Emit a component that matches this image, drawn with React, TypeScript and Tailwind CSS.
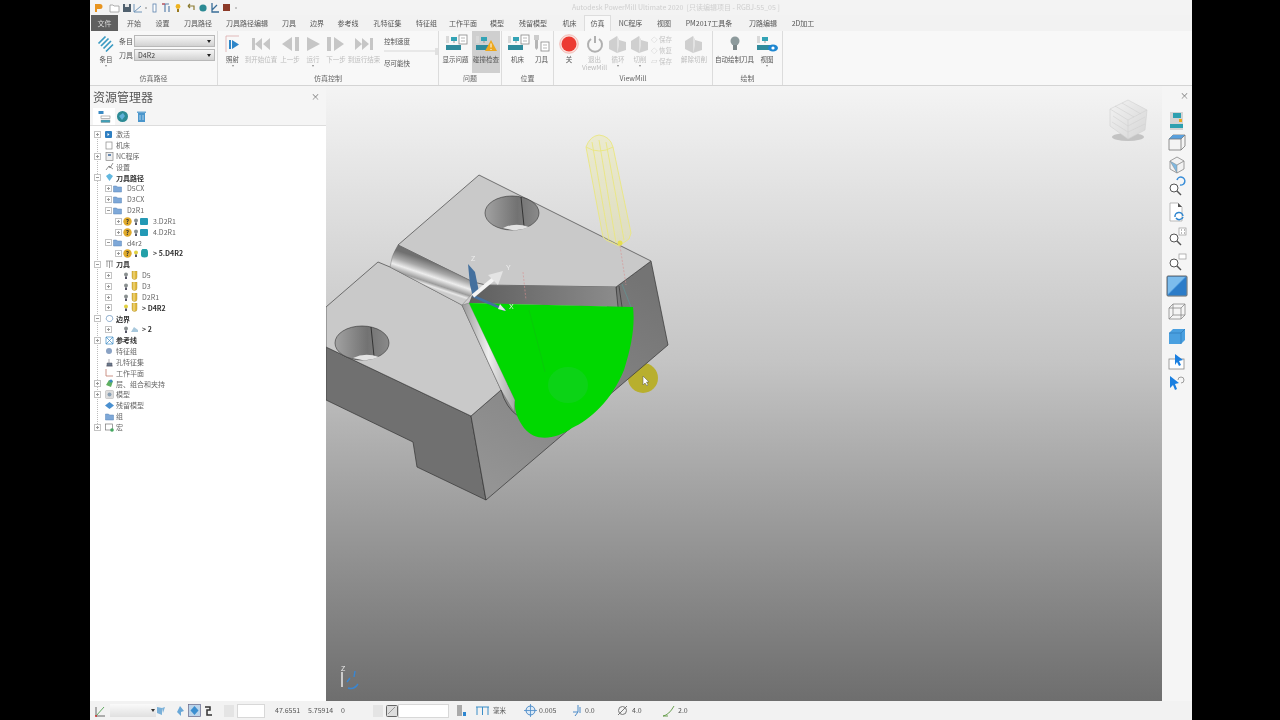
// PowerMill simulation window
import type { ReactNode } from 'react';

const FONT = "font-['Noto_Sans_CJK_SC','Liberation_Sans',sans-serif]";

/* =======================
   Top bars
======================= */

const QuickBar = () => (
  <svg width="180" height="14" viewBox="0 0 180 14" className="shrink-0">
    <path d="M5 3h5a2 2 0 0 1 0 5H7v3H5z" fill="#e8941f" />
    <path d="M20 4h3l1 1h5v6h-9z" fill="#fff" stroke="#999" strokeWidth=".8" />
    <rect x="33" y="3" width="8" height="8" fill="#50606e" />
    <rect x="35" y="3" width="4" height="3" fill="#e6e6e6" />
    <path d="M44 3v8h8M44 11l7-6" fill="none" stroke="#6e94b8" strokeWidth="1" />
    <circle cx="56" cy="7" r=".8" fill="#777" />
    <rect x="63" y="3" width="3" height="8" fill="#fff" stroke="#5c82ad" strokeWidth=".8" />
    <path d="M72 3h7M75 3v8M79 5v6" fill="none" stroke="#5c82ad" strokeWidth="1.2" />
    <path d="M72 3h3" stroke="#d85050" strokeWidth="1.2" />
    <circle cx="88" cy="5.5" r="2.4" fill="#eeb320" />
    <rect x="87" y="8" width="2" height="3" fill="#9a7a20" />
    <path d="M98 5h6v4M98 5l2-2M98 5l2 2" fill="none" stroke="#8a7a30" strokeWidth="1.2" />
    <circle cx="113" cy="7" r="3.6" fill="#2c8a94" />
    <path d="M122 2v9h7M122 9l5-5" fill="none" stroke="#3a6e98" strokeWidth="1.3" />
    <rect x="133" y="3" width="7" height="7" fill="#8c3a28" />
    <circle cx="146" cy="7" r=".8" fill="#888" />
  </svg>
);

const tabs: { name: string; cls: string }[] = [
  { name: '开始', cls: 'w-[28px]' },
  { name: '设置', cls: 'w-[29px]' },
  { name: '刀具路径', cls: 'w-[42px]' },
  { name: '刀具路径编辑', cls: 'w-[56px]' },
  { name: '刀具', cls: 'w-[28px]' },
  { name: '边界', cls: 'w-[28px]' },
  { name: '参考线', cls: 'w-[34px]' },
  { name: '孔特征集', cls: 'w-[45px]' },
  { name: '特征组', cls: 'w-[33px]' },
  { name: '工作平面', cls: 'w-[40px]' },
  { name: '模型', cls: 'w-[28px]' },
  { name: '残留模型', cls: 'w-[44px]' },
  { name: '机床', cls: 'w-[29px]' },
  { name: '仿真', cls: 'w-[27px]' },
  { name: 'NC程序', cls: 'w-[39px]' },
  { name: '视图', cls: 'w-[28px]' },
  { name: 'PM2017工具条', cls: 'w-[62px]' },
  { name: '刀路编辑', cls: 'w-[46px]' },
  { name: '2D加工', cls: 'w-[34px]' },
];

const TabBar = () => (
  <div className="flex items-stretch h-[16px] pl-[1px] text-[7px] text-[#555]">
    <div className="w-[27px] bg-[#5f5f5f] text-[#ddd] flex items-center justify-center">文件</div>
    <div className="w-[2px]" />
    {tabs.map((tab) => (
      <div
        key={tab.name}
        className={`${tab.cls} flex items-center justify-center ${
          tab.name === '仿真' ? 'bg-[#f8f8f8] border border-b-0 border-[#ddd]' : ''
        }`}
      >
        {tab.name}
      </div>
    ))}
  </div>
);

/* =======================
   Ribbon
======================= */

const RibbonBtn = ({
  cls,
  label,
  off,
  on,
  caret,
  children,
}: {
  cls: string;
  label: ReactNode;
  off?: boolean;
  on?: boolean;
  caret?: boolean;
  children: ReactNode;
}) => (
  <div
    className={`${cls} shrink-0 flex flex-col items-center pt-[2px] leading-[8px] text-[6.5px] ${
      off ? 'text-[#bcbcbc]' : 'text-[#555]'
    } ${on ? 'bg-[#cfcfcf]' : ''}`}
  >
    <div className="h-[21px] flex items-center justify-center">{children}</div>
    <div className="text-center whitespace-nowrap mt-[1px]">{label}</div>
    {caret && <div className="w-0 h-0 mt-[2px] border-x-[1.5px] border-t-[2px] border-x-transparent border-t-[#888]" />}
  </div>
);

const Group = ({ cls, label, children }: { cls: string; label: string; children: ReactNode }) => (
  <div className={`${cls} shrink-0 flex flex-col border-r border-[#dcdcdc]`}>
    <div className="h-[42px] flex items-stretch">{children}</div>
    <div className="h-[13px] flex items-center justify-center text-[7px] text-[#666]">{label}</div>
  </div>
);

const Combo = ({ value }: { value?: string }) => (
  <div className="w-[81px] h-[12px] flex items-center justify-between px-[3px] border border-[#b8b8b8] bg-linear-to-b from-[#f6f6f6] to-[#d2d2d2] text-[7px] text-[#444]">
    <span>{value}</span>
    <span className="w-0 h-0 border-x-[2px] border-t-[3px] border-x-transparent border-t-[#222]" />
  </div>
);

const Shape = ({ d, c = '#c6c6c6', w = 20 }: { d: string; c?: string; w?: number }) => (
  <svg width={w} height="16" viewBox={`0 0 ${w} 16`}>
    <path d={d} fill={c} />
  </svg>
);

const MachineIcon = ({ children }: { children?: ReactNode }) => (
  <svg width="26" height="20" viewBox="0 0 26 20">
    <rect x="8" y="3" width="6" height="4" fill="#33a3b5" />
    <path d="M11 7v2" stroke="#999" />
    <rect x="3" y="11" width="15" height="5" fill="#2f8b9c" />
    <rect x="3" y="2" width="3" height="7" fill="#d9d9d9" />
    {children}
  </svg>
);

const PageBox = () => (
  <g>
    <rect x="16" y="1" width="8" height="9" fill="#fff" stroke="#888" strokeWidth=".8" />
    <path d="M18 4h4M18 7h4" stroke="#999" strokeWidth=".7" />
  </g>
);

const GrayBlock = () => (
  <svg width="22" height="20" viewBox="0 0 22 20">
    <path d="M2 7l8-5 2 4 7 2v8l-9 3-8-4z" fill="#cfcfcf" />
    <path d="M10 2l2 4v6l-2 8z" fill="#e2e2e2" />
  </svg>
);

const Ribbon = () => (
  <div className="flex h-[55px] bg-[#f8f8f8] border-b border-[#d4d4d4]">
    <Group cls="w-[128px]" label="仿真路径">
      <RibbonBtn cls="w-[26px] ml-[3px]" label="条目" caret>
        <svg width="18" height="18" viewBox="0 0 18 18">
          <path d="M1.500 8.500l7-7M4 11l7.500-7.500M6.500 13.500l7.500-7.500M9 16.500l7-7" fill="none" stroke="#3a9ac2" strokeWidth="1.700" />
        </svg>
      </RibbonBtn>
      <div className="flex flex-col gap-[2px] pt-[4px] text-[7px] text-[#555]">
        <div className="flex items-center">
          <span className="w-[15px]">条目</span>
          <Combo />
        </div>
        <div className="flex items-center">
          <span className="w-[15px]">刀具</span>
          <Combo value="D4R2" />
        </div>
      </div>
    </Group>

    <Group cls="w-[221px]" label="仿真控制">
      <RibbonBtn cls="w-[23px] ml-[3px]" label="照射" caret>
        <svg width="18" height="18" viewBox="0 0 18 18">
          <path d="M2 1h13M2 1v16" stroke="#d9a0a0" strokeWidth=".7" fill="none" />
          <rect x="5" y="5" width="2" height="9" fill="#2e86c9" />
          <path d="M8 5l7 4.500-7 4.500z" fill="#2e86c9" />
        </svg>
      </RibbonBtn>
      <RibbonBtn cls="w-[34px]" label="到开始位置" off>
        <Shape d="M1 2h3v12H1zM11 2v12L4 8zM19 2v12l-7-6z" />
      </RibbonBtn>
      <RibbonBtn cls="w-[24px]" label="上一步" off>
        <Shape d="M12 1v14L2 8zM15 1h4v14h-4z" />
      </RibbonBtn>
      <RibbonBtn cls="w-[22px]" label="运行" off caret>
        <Shape d="M3 1l13 7-13 7z" w={18} />
      </RibbonBtn>
      <RibbonBtn cls="w-[24px]" label="下一步" off>
        <Shape d="M1 1h4v14H1zM8 1l10 7-10 7z" />
      </RibbonBtn>
      <RibbonBtn cls="w-[32px]" label="到运行结束" off>
        <Shape d="M1 2l7 6-7 6zM8 2l7 6-7 6zM16 2h3v12h-3z" />
      </RibbonBtn>
      <div className="ml-[4px] w-[54px] flex flex-col pt-[6px] text-[6.5px] text-[#555] leading-[8px]">
        <span>控制速度</span>
        <div className="mt-[5px] h-[2px] bg-[#e8e8e8] flex justify-end items-center">
          <div className="w-[3px] h-[7px] bg-[#e0e0e0]" />
        </div>
        <span className="mt-[7px]">尽可能快</span>
      </div>
    </Group>

    <Group cls="w-[63px]" label="问题">
      <RibbonBtn cls="w-[33px]" label="显示问题">
        <MachineIcon>
          <PageBox />
        </MachineIcon>
      </RibbonBtn>
      <RibbonBtn cls="w-[28px] -mb-[1px]" label="碰撞检查" on>
        <MachineIcon>
          <path d="M18 6l6 11H12z" fill="#eea81c" />
          <path d="M18 9.500v4M18 15v1" stroke="#fff" strokeWidth="1" />
        </MachineIcon>
      </RibbonBtn>
    </Group>

    <Group cls="w-[52px]" label="位置">
      <RibbonBtn cls="w-[27px] ml-[2px]" label="机床">
        <MachineIcon>
          <PageBox />
        </MachineIcon>
      </RibbonBtn>
      <RibbonBtn cls="w-[21px]" label="刀具">
        <svg width="18" height="20" viewBox="0 0 18 20">
          <rect x="1" y="1" width="5" height="5" fill="#ccc" />
          <path d="M2 6h3v8l-1.500 2L2 14z" fill="#b5b5b5" />
          <rect x="8" y="8" width="8" height="9" fill="#fff" stroke="#888" strokeWidth=".8" />
          <path d="M10 11h4M10 14h4" stroke="#999" strokeWidth=".7" />
        </svg>
      </RibbonBtn>
    </Group>

    <Group cls="w-[159px]" label="ViewMill">
      <RibbonBtn cls="w-[26px] ml-[2px]" label="关">
        <svg width="20" height="20" viewBox="0 0 20 20">
          <circle cx="10" cy="10" r="9.300" fill="#fbe0dc" stroke="#f0b0a8" strokeWidth=".8" />
          <circle cx="10" cy="10" r="7.500" fill="#ec3a32" />
        </svg>
      </RibbonBtn>
      <RibbonBtn cls="w-[25px]" label={<>退出<br />ViewMill</>} off>
        <svg width="18" height="18" viewBox="0 0 18 18">
          <path d="M5 4a7 7 0 1 0 8 0" fill="none" stroke="#b0b0b0" strokeWidth="2" />
          <path d="M9 1v7" stroke="#b0b0b0" strokeWidth="2" />
        </svg>
      </RibbonBtn>
      <RibbonBtn cls="w-[22px]" label="循环" off caret>
        <GrayBlock />
      </RibbonBtn>
      <RibbonBtn cls="w-[22px]" label="切削" off caret>
        <GrayBlock />
      </RibbonBtn>
      <div className="w-[28px] pt-[3px] flex flex-col gap-[1px] text-[6.5px] leading-[10px] text-[#c4c4c4]">
        <span className="whitespace-nowrap">◇ 保存</span>
        <span className="whitespace-nowrap">◇ 恢复</span>
        <span className="whitespace-nowrap">▱ 保存</span>
      </div>
      <RibbonBtn cls="w-[30px]" label="解除切削" off>
        <GrayBlock />
      </RibbonBtn>
    </Group>

    <Group cls="w-[70px]" label="绘制">
      <RibbonBtn cls="w-[43px]" label="自动绘制刀具">
        <svg width="12" height="18" viewBox="0 0 12 18">
          <circle cx="6" cy="6" r="4.500" fill="#8d9a9c" />
          <rect x="4" y="10" width="4" height="5" fill="#7b8688" />
        </svg>
      </RibbonBtn>
      <RibbonBtn cls="w-[22px]" label="视图" caret>
        <MachineIcon>
          <ellipse cx="19" cy="14" rx="5" ry="3.500" fill="#1e86d0" />
          <circle cx="19" cy="14" r="1.600" fill="#fff" />
        </MachineIcon>
      </RibbonBtn>
    </Group>
  </div>
);

/* =======================
   Resource tree
======================= */

const Box = ({ open }: { open?: boolean }) => (
  <span className="relative w-[7px] h-[7px] shrink-0 border border-[#c4c4c4] bg-white">
    <span className="absolute left-[1px] right-[1px] top-[2px] h-[1px] bg-[#999]" />
    {!open && <span className="absolute top-[1px] bottom-[1px] left-[2px] w-[1px] bg-[#999]" />}
  </span>
);

const Blank = () => <span className="w-[7px] h-[7px] shrink-0" />;

const Ico = ({ children }: { children: ReactNode }) => (
  <svg width="9" height="9" viewBox="0 0 9 9" className="shrink-0">
    {children}
  </svg>
);

const Folder = () => (
  <Ico>
    <path d="M.5 2h3l1 1h4v5h-8z" fill="#7ea8d8" stroke="#5a86b8" strokeWidth=".5" />
  </Ico>
);
const Bulb = ({ lit }: { lit?: boolean }) => (
  <svg width="6" height="9" viewBox="0 0 6 9" className="shrink-0">
    <circle cx="3" cy="3.500" r="2" fill={lit ? '#e0d040' : '#8a9090'} />
    <rect x="2" y="5.500" width="2" height="2.500" fill="#556" />
  </svg>
);
const Warn = () => (
  <svg width="9" height="9" viewBox="0 0 9 9" className="shrink-0">
    <circle cx="4.500" cy="4.500" r="4.200" fill="#dfa92a" />
    <text x="4.500" y="7" fontSize="6.500" fontWeight="700" textAnchor="middle" fill="#333">?</text>
  </svg>
);
const Path = ({ round }: { round?: boolean }) => (
  <Ico>
    {round ? <path d="M1 3a3.500 3.500 0 0 1 7 0v3a3.500 2.500 0 0 1-7 0z" fill="#23a0a8" /> : <rect x="0" y="1" width="8" height="7" rx="1" fill="#2399b5" />}
  </Ico>
);
const Cutter = () => (
  <Ico>
    <path d="M2 0h5v6a2.500 2.500 0 0 1-5 0z" fill="#e2b93c" stroke="#a88a28" strokeWidth=".4" />
    <path d="M4 0v8" stroke="#f4e7ae" strokeWidth=".8" />
  </Ico>
);

type Row = { lvl: string; lead: ReactNode; label: string; bold?: boolean; gap?: string };

const rows: Row[] = [
  { lvl: 'pl-[4px]', lead: <><Box /><Ico><rect x="0" y="1" width="7" height="7" rx="1" fill="#2e7fc2" /><path d="M2.500 3l2 1.500-2 1.500z" fill="#fff" /></Ico></>, label: '激活' },
  { lvl: 'pl-[4px]', lead: <><Blank /><Ico><rect x="1" y="1" width="6" height="7" fill="#fff" stroke="#888" strokeWidth=".7" /></Ico></>, label: '机床' },
  { lvl: 'pl-[4px]', lead: <><Box /><Ico><rect x="1" y="0.500" width="7" height="8" fill="#eee" stroke="#888" strokeWidth=".7" /><rect x="3" y="2" width="3" height="2" fill="#6a8ab0" /></Ico></>, label: 'NC程序' },
  { lvl: 'pl-[4px]', lead: <><Blank /><Ico><path d="M1 8l3-4 1 2 3-5M4 4l4 3" fill="none" stroke="#777" strokeWidth=".8" /></Ico></>, label: '设置' },
  { lvl: 'pl-[4px]', lead: <><Box open /><Ico><path d="M1 3l3.500-2.500L8 3 4.500 8z" fill="#62b8e0" /></Ico></>, label: '刀具路径', bold: true },
  { lvl: 'pl-[15px]', lead: <><Box /><Folder /></>, label: 'D5CX', gap: 'ml-[5px]' },
  { lvl: 'pl-[15px]', lead: <><Box /><Folder /></>, label: 'D3CX', gap: 'ml-[5px]' },
  { lvl: 'pl-[15px]', lead: <><Box open /><Folder /></>, label: 'D2R1', gap: 'ml-[5px]' },
  { lvl: 'pl-[25px]', lead: <><Box /><Warn /><Bulb /><Path /></>, label: '3.D2R1', gap: 'ml-[4px]' },
  { lvl: 'pl-[25px]', lead: <><Box /><Warn /><Bulb /><Path /></>, label: '4.D2R1', gap: 'ml-[4px]' },
  { lvl: 'pl-[15px]', lead: <><Box open /><Folder /></>, label: 'd4r2', gap: 'ml-[5px]' },
  { lvl: 'pl-[25px]', lead: <><Box /><Warn /><Bulb lit /><Path round /></>, label: '> 5.D4R2', bold: true, gap: 'ml-[4px]' },
  { lvl: 'pl-[4px]', lead: <><Box open /><Ico><path d="M1 1h7M2 1v6M4.500 1v7M7 1v6" stroke="#888" strokeWidth=".8" fill="none" /></Ico></>, label: '刀具', bold: true },
  { lvl: 'pl-[15px]', lead: <><Box /><span className="w-[9px]" /><Bulb /><Cutter /></>, label: 'D5', gap: 'ml-[3px]' },
  { lvl: 'pl-[15px]', lead: <><Box /><span className="w-[9px]" /><Bulb /><Cutter /></>, label: 'D3', gap: 'ml-[3px]' },
  { lvl: 'pl-[15px]', lead: <><Box /><span className="w-[9px]" /><Bulb /><Cutter /></>, label: 'D2R1', gap: 'ml-[3px]' },
  { lvl: 'pl-[15px]', lead: <><Box /><span className="w-[9px]" /><Bulb lit /><Cutter /></>, label: '> D4R2', bold: true, gap: 'ml-[3px]' },
  { lvl: 'pl-[4px]', lead: <><Box open /><Ico><path d="M1.500 3.500a3 2 0 0 1 6 0c1 2-1 4-3 4s-4-2-3-4z" fill="#fff" stroke="#5a8ab8" strokeWidth=".7" /></Ico></>, label: '边界', bold: true },
  { lvl: 'pl-[15px]', lead: <><Box /><span className="w-[9px]" /><Bulb /><Ico><path d="M1 7l3-5 4 3v2z" fill="#a8c8dc" /></Ico></>, label: '> 2', bold: true, gap: 'ml-[3px]' },
  { lvl: 'pl-[4px]', lead: <><Box /><Ico><path d="M1 1l7 7M8 1L1 8M1 1v7h7V1z" fill="none" stroke="#3a8ac4" strokeWidth=".7" /></Ico></>, label: '参考线', bold: true },
  { lvl: 'pl-[4px]', lead: <><Blank /><Ico><circle cx="4" cy="4" r="3" fill="#8aa2c4" /></Ico></>, label: '特征组' },
  { lvl: 'pl-[4px]', lead: <><Blank /><Ico><path d="M4 1v4M1 8h7M2 5h5v3H2z" fill="#6a7a8c" stroke="#556" strokeWidth=".5" /></Ico></>, label: '孔特征集' },
  { lvl: 'pl-[4px]', lead: <><Blank /><Ico><path d="M1 1v7h7" fill="none" stroke="#c07a6a" strokeWidth=".8" /></Ico></>, label: '工作平面' },
  { lvl: 'pl-[4px]', lead: <><Box /><Ico><path d="M1 6l3-5 4 1-2 6z" fill="#5fb060" /><circle cx="6" cy="2" r="1.500" fill="#3a8ac4" /></Ico></>, label: '层、组合和夹持' },
  { lvl: 'pl-[4px]', lead: <><Box /><Ico><rect x="0.500" y="0.500" width="8" height="8" rx="1" fill="#ddd" stroke="#aaa" strokeWidth=".5" /><circle cx="4.500" cy="4.500" r="2" fill="#8aa0b4" /></Ico></>, label: '模型' },
  { lvl: 'pl-[4px]', lead: <><Blank /><Ico><path d="M0 4.500L4.500 1 9 4.500 4.500 8z" fill="#4a90d0" /></Ico></>, label: '残留模型' },
  { lvl: 'pl-[4px]', lead: <><Blank /><Folder /></>, label: '组' },
  { lvl: 'pl-[4px]', lead: <><Box /><Ico><rect x="0.500" y="1" width="7" height="6" fill="#fff" stroke="#777" strokeWidth=".7" /><circle cx="7" cy="7" r="1.800" fill="#44a860" /></Ico></>, label: '宏' },
];

const ResourcePanel = () => (
  <div className="w-[236px] shrink-0 bg-white flex flex-col">
    <div className="h-[22px] bg-[#f5f5f5] flex items-center justify-between pl-[3px] pr-[6px] text-[12px] text-[#555]">
      <span>资源管理器</span>
      <span className="text-[9px] text-[#777]">×</span>
    </div>
    <div className="h-[18px] bg-[#f5f5f5] border-b border-[#ddd] flex items-stretch pl-[3px]">
      <div className="w-[22px] bg-white flex items-center justify-center">
        <svg width="13" height="13" viewBox="0 0 13 13">
          <rect x="0.500" y="1" width="5" height="3" fill="#3a8ac4" />
          <rect x="3" y="6" width="9" height="2.500" fill="#fff" stroke="#888" strokeWidth=".6" />
          <rect x="3" y="10" width="9" height="2.500" fill="#3fa0b8" stroke="#888" strokeWidth=".4" />
        </svg>
      </div>
      <svg width="13" height="13" viewBox="0 0 13 13" className="ml-[1px] self-center">
        <circle cx="6.500" cy="6.500" r="5.500" fill="#2c8a94" />
        <path d="M3 6l4-3 2 3-3 4z" fill="#5fb0d8" />
      </svg>
      <svg width="11" height="13" viewBox="0 0 11 13" className="ml-[7px] self-center">
        <path d="M2 3h7v9H2z" fill="#4a96cc" />
        <rect x="1" y="1.500" width="9" height="1.500" fill="#6aa8d4" />
        <path d="M4 5v5M7 5v5" stroke="#d8ecf8" strokeWidth=".7" />
      </svg>
    </div>
    <div className="relative flex-1 pt-[3px] text-[7px] text-[#666]">
      {/* tree guide line */}
      <div className="absolute left-[7px] top-[8px] h-[292px] border-l border-dotted border-[#bbb]" />
      {rows.map((row, i) => (
        <div key={i} className={`relative flex items-center h-[10.85px] ${row.lvl}`}>
          <span className={`flex items-center ${row.lvl === 'pl-[4px]' ? 'gap-[4px]' : 'gap-[1px]'}`}>{row.lead}</span>
          <span className={`${row.gap ?? 'ml-[2px]'} whitespace-nowrap ${row.bold ? 'font-bold text-[#333]' : ''}`}>
            {row.label}
          </span>
        </div>
      ))}
    </div>
  </div>
);

/* =======================
   3D view
======================= */

const ModelView = () => (
  <svg viewBox="326 86 836 615" className="w-full h-full block">
    <defs>
      <linearGradient id="grooveA" gradientUnits="userSpaceOnUse" x1="432" y1="262" x2="424" y2="286">
        <stop offset="0" stopColor="#707070" />
        <stop offset=".3" stopColor="#a8a8a8" />
        <stop offset=".55" stopColor="#ededed" />
        <stop offset=".8" stopColor="#9c9c9c" />
        <stop offset=".92" stopColor="#e8e8e8" />
        <stop offset="1" stopColor="#cccccc" />
      </linearGradient>
      <linearGradient id="grooveB" x1="0" y1="0" x2="1" y2="0">
        <stop offset="0" stopColor="#9a9a9a" />
        <stop offset=".5" stopColor="#eeeeee" />
        <stop offset="1" stopColor="#a5a5a5" />
      </linearGradient>
      <linearGradient id="wall" x1="0" y1="0" x2="1" y2="0">
        <stop offset="0" stopColor="#5e5e5e" />
        <stop offset="1" stopColor="#8c8c8c" />
      </linearGradient>
      <linearGradient id="lower" gradientUnits="userSpaceOnUse" x1="640" y1="280" x2="500" y2="490">
        <stop offset="0" stopColor="#747474" />
        <stop offset="1" stopColor="#949494" />
      </linearGradient>
      <linearGradient id="hole" x1="0" y1="0" x2="1" y2="0">
        <stop offset="0" stopColor="#a2a2a2" />
        <stop offset=".6" stopColor="#727272" />
        <stop offset="1" stopColor="#8a8a8a" />
      </linearGradient>
      <linearGradient id="cube" x1="0" y1="0" x2="1" y2="1">
        <stop offset="0" stopColor="#f2f2f2" />
        <stop offset="1" stopColor="#d6d6d6" />
      </linearGradient>
    </defs>

    {/* view cube */}
    <ellipse cx="1128" cy="137" rx="16" ry="4" fill="#a8a8a8" opacity=".6" />
    <g stroke="#d0d0d0" strokeWidth=".6">
      <path d="M1128 100l19 10-2 20-17 9-18-13v-17z" fill="url(#cube)" />
      <path d="M1110 109l18 11 19-10M1128 120v19M1115 106l19 11M1122 103l19 11M1113 116l15 10 17-9M1112 122l16 10 17-8" fill="none" />
    </g>

    {/* cursor highlight */}
    <circle cx="643" cy="378" r="15" fill="#b8af2e" />
    <path d="M643 376l0 9 2-2 2 3 1-1-1.500-3 2.500 0z" fill="#fff" stroke="#555" strokeWidth=".5" />

    {/* lower faces */}
    <path d="M326 347L471 416L486 500L417 467L413 442L326 400z" fill="#707070" stroke="#333" strokeWidth=".7" />
    <path d="M471 416L501 390L616 300L616 287L651 261L668 345L486 500z" fill="url(#lower)" stroke="#333" strokeWidth=".7" />

    {/* top faces */}
    <path d="M479 175L651 261L616 287L486 285L473 282L398 245z" fill="#c9c9c9" stroke="#444" strokeWidth=".7" />
    <path d="M378 262L326 307V347L471 416L501 390L462 305L390 267z" fill="#c9c9c9" stroke="#444" strokeWidth=".7" />

    {/* channel */}
    <path d="M398 245Q391 256 390 267L462 305L472 294L473 282z" fill="url(#grooveA)" stroke="#666" strokeWidth=".4" />
    <path d="M462 305L469 303L515 400L514 412L501 390z" fill="url(#grooveB)" stroke="#666" strokeWidth=".4" />
    <path d="M486 285L616 287L618 307L469 303L473 293z" fill="url(#wall)" />
    <path d="M616 287L618 307M619 286L622 307" stroke="#333" strokeWidth=".7" fill="none" />
    <path d="M622 284L631 307" stroke="#5a9a9a" strokeWidth=".6" fill="none" />
    <path d="M501 390Q506 408 518 416" stroke="#333" strokeWidth=".7" fill="none" />

    {/* holes */}
    <g>
      <ellipse cx="512" cy="213" rx="27" ry="17" fill="url(#hole)" stroke="#333" strokeWidth=".6" />
      <path d="M521 197l3 29" stroke="#222" strokeWidth=".8" />
      <path d="M503 228Q515 222 529 227Q520 231 512 230z" fill="#e2e2e2" />
      <ellipse cx="362" cy="343" rx="27" ry="17" fill="url(#hole)" stroke="#333" strokeWidth=".6" />
      <path d="M371 327l3 29" stroke="#222" strokeWidth=".8" />
      <path d="M353 358Q365 352 379 357Q370 361 362 360z" fill="#e2e2e2" />
    </g>

    {/* machined area */}
    <path
      d="M469 303L633 307C635 325 632 345 624 370C612 400 590 420 572 428C555 440 535 442 524 428C517 418 514 410 515 400z"
      fill="#00d800"
    />
    <ellipse cx="568" cy="385" rx="20" ry="18" fill="#14d024" opacity=".6" />
    <path d="M529 310L540 352L545 372" stroke="#1ea020" strokeWidth=".5" opacity=".5" fill="none" />

    {/* tool */}
    <g fill="none" stroke="#eae680" strokeWidth=".9">
      <path d="M586 147Q590 136 599 135Q610 136 613 147L631 233L629 239L619 246L606 240L603 237z" fill="#ece88e" fillOpacity=".3" />
      <path d="M592 142L609 240M599 140L616 243M606 142L624 240M586 147Q599 155 613 147" />
    </g>
    <circle cx="620" cy="243" r="2.500" fill="#e6de50" />
    <path d="M620 246L626 285M523 272L526 300" stroke="#d89090" strokeWidth=".6" strokeDasharray="2 1.500" fill="none" />

    {/* workplane gizmo */}
    <path d="M468 264L475 272L479 292L473 297L470 285z" fill="#44709e" />
    <path d="M473 296L505 310" stroke="#44709e" strokeWidth="2.500" />
    <path d="M500 304L506 311L498 309z" fill="#e8e8e8" />
    <path d="M473 296L497 276" stroke="#f4f4f4" strokeWidth="4" />
    <path d="M503 271L488 275L498 285z" fill="#e4e4e4" />
    <g fontSize="7" fontFamily="Liberation Sans" fill="#eeeeee">
      <text x="471" y="261">Z</text>
      <text x="506" y="270">Y</text>
      <text x="509" y="309">X</text>
    </g>

    {/* small triad */}
    <path d="M342 672V687" stroke="#e8e8e8" strokeWidth="1.500" fill="none" />
    <path d="M355 671L354 677M358 684Q354 690 348 688M347 682L350 678" stroke="#3a86d0" strokeWidth="1.500" fill="none" />
    <text x="341" y="671" fontSize="7" fontFamily="Liberation Sans" fill="#eee">Z</text>
  </svg>
);

/* =======================
   Right toolbar
======================= */

const ToolBtn = ({ cls, children }: { cls: string; children: ReactNode }) => (
  <div className={`${cls} w-[20px] h-[20px] flex items-center justify-center`}>{children}</div>
);

const Lens = ({ children }: { children?: ReactNode }) => (
  <svg width="20" height="20" viewBox="0 0 20 20">
    <circle cx="7" cy="12" r="4" fill="#fff" stroke="#555" strokeWidth="1" />
    <path d="M10 15l4 4" stroke="#555" strokeWidth="1.500" />
    {children}
  </svg>
);

const RightBar = () => (
  <div className="w-[30px] shrink-0 bg-[#f5f5f5] flex flex-col items-center">
    <div className="w-full h-[20px] pr-[3px] flex items-center justify-end text-[9px] text-[#777]">×</div>
    <ToolBtn cls="mt-[5px]">
      <svg width="18" height="20" viewBox="0 0 18 20">
        <rect x="2" y="1" width="13" height="18" fill="#d4d4d4" />
        <rect x="5" y="2" width="8" height="5" fill="#2ea0b0" />
        <rect x="2" y="13" width="13" height="4" fill="#2ea0b0" />
        <rect x="11" y="8" width="3" height="3" fill="#eea81c" />
      </svg>
    </ToolBtn>
    <ToolBtn cls="mt-[1px]">
      <svg width="20" height="20" viewBox="0 0 20 20">
        <path d="M2 7l4-4h12v11l-4 4H2z" fill="#f4f4f4" stroke="#777" strokeWidth=".8" />
        <path d="M2 7l4-4h12l-4 4z" fill="#5aa0dc" />
        <path d="M2 7h12v11M14 7l4-4" fill="none" stroke="#777" strokeWidth=".8" />
      </svg>
    </ToolBtn>
    <ToolBtn cls="mt-[3px]">
      <svg width="18" height="18" viewBox="0 0 18 18">
        <path d="M9 1l7 4v8l-7 4-7-4V5z" fill="#f2f2f2" stroke="#888" strokeWidth=".8" />
        <path d="M2 5l7 4 7-4-7 4v8z" fill="#7fb8e0" stroke="#888" strokeWidth=".5" />
      </svg>
    </ToolBtn>
    <ToolBtn cls="mt-[1px]">
      <Lens>
        <path d="M13 9a4 4 0 1 0-3-5" fill="none" stroke="#3a8ed8" strokeWidth="1.500" />
      </Lens>
    </ToolBtn>
    <ToolBtn cls="mt-[6px]">
      <svg width="18" height="20" viewBox="0 0 18 20">
        <path d="M2 1h8l4 4v14H2z" fill="#fff" stroke="#aaa" strokeWidth=".8" />
        <path d="M10 1l4 4h-4z" fill="#555" />
        <path d="M7 15a4 4 0 0 1 8-1M15 15a4 4 0 0 1-7 1" fill="none" stroke="#2e86d0" strokeWidth="1.500" />
      </svg>
    </ToolBtn>
    <ToolBtn cls="mt-[4px]">
      <Lens>
        <rect x="12" y="2" width="7" height="7" fill="#fff" stroke="#999" strokeWidth=".7" />
        <path d="M14 4h1M17 4h1M14 7h1M17 7h1" stroke="#777" />
      </Lens>
    </ToolBtn>
    <ToolBtn cls="mt-[5px]">
      <Lens>
        <rect x="12" y="3" width="7" height="5" fill="#fff" stroke="#999" strokeWidth=".7" />
      </Lens>
    </ToolBtn>
    <ToolBtn cls="mt-[5px]">
      <svg width="22" height="22" viewBox="0 0 22 22" className="shrink-0">
        <rect x="1" y="1" width="20" height="20" rx="1" fill="#4a9ae0" stroke="#666" strokeWidth="1" />
        <path d="M2 20L20 2v18z" fill="#2c7cc8" />
        <path d="M2 2h17L2 19z" fill="#7cbcec" />
      </svg>
    </ToolBtn>
    <ToolBtn cls="mt-[5px]">
      <svg width="20" height="20" viewBox="0 0 20 20" fill="none" stroke="#888" strokeWidth=".8">
        <path d="M2 7l4-4h12v11l-4 4H2zM2 7h12v11M14 7l4-4M6 3v11H18M6 14l-4 4" />
      </svg>
    </ToolBtn>
    <ToolBtn cls="mt-[5px]">
      <svg width="20" height="20" viewBox="0 0 20 20">
        <path d="M2 7l4-4h12v11l-4 4H2z" fill="#4aa0e0" />
        <path d="M2 7h12v11M14 7l4-4" fill="none" stroke="#2c78b8" strokeWidth=".7" />
      </svg>
    </ToolBtn>
    <ToolBtn cls="mt-[6px]">
      <svg width="20" height="18" viewBox="0 0 20 18">
        <rect x="2" y="6" width="15" height="10" fill="#fff" stroke="#888" strokeWidth=".8" />
        <path d="M8 1l8 6-4 1 2 4-2 1-2-4-2 3z" fill="#1a7fe0" />
      </svg>
    </ToolBtn>
    <ToolBtn cls="mt-[1px]">
      <svg width="20" height="18" viewBox="0 0 20 18">
        <path d="M3 2l9 7-4 1 2 5-2 1-2-5-3 3z" fill="#1a7fe0" />
        <path d="M11 6a3 3 0 1 1 3 3" fill="none" stroke="#888" strokeWidth=".8" />
      </svg>
    </ToolBtn>
  </div>
);

/* =======================
   Status bar
======================= */

const Field = ({ cls }: { cls: string }) => <div className={`${cls} h-[14px] bg-white border border-[#d8d8d8]`} />;

const StatusBar = () => (
  <div className="h-[19px] bg-[#f2f2f2] flex items-center text-[7px] text-[#555]">
    <svg width="16" height="14" viewBox="0 0 16 14" className="ml-[3px]">
      <path d="M3 12V3M3 12h9" stroke="#444" strokeWidth=".8" />
      <path d="M3 12l8-9" stroke="#60a860" strokeWidth="1" />
      <circle cx="3" cy="12" r="1" fill="#d03030" />
    </svg>
    <div className="ml-[1px] w-[46px] h-[13px] bg-linear-to-b from-[#fafafa] to-[#e0e0e0] flex items-center justify-end pr-[1px]">
      <span className="w-0 h-0 border-x-[2px] border-t-[3px] border-x-transparent border-t-[#333]" />
    </div>
    <svg width="10" height="12" viewBox="0 0 10 12"><path d="M1 2l5 1v7L1 8zM6 3l3-1-2 6z" fill="#7ab0d8" /></svg>
    <svg width="10" height="12" viewBox="0 0 10 12" className="ml-[9px]"><path d="M5 1l4 5-3 1v4L2 7z" fill="#6aa8d8" /></svg>
    <svg width="13" height="13" viewBox="0 0 13 13" className="ml-[3px]"><rect x=".5" y=".5" width="12" height="12" fill="#bcd4ea" stroke="#668" strokeWidth=".7" /><path d="M6.500 2l4 4.500-4 4.500-4-4.500z" fill="#3a8ed0" /></svg>
    <svg width="9" height="12" viewBox="0 0 9 12" className="ml-[3px]"><path d="M1 2h5v3H3v5h5" fill="none" stroke="#333" strokeWidth="1.500" /></svg>
    <div className="ml-[11px] w-[10px] h-[12px] bg-[#e4e4e4]" />
    <Field cls="ml-[3px] w-[28px]" />
    <span className="ml-[10px] w-[28px]">47.6551</span>
    <span className="ml-[5px] w-[28px]">5.75914</span>
    <span className="ml-[5px] w-[4px]">0</span>
    <div className="ml-[28px] w-[10px] h-[12px] bg-[#e4e4e4]" />
    <svg width="12" height="12" viewBox="0 0 12 12" className="ml-[3px]"><rect x=".5" y=".5" width="11" height="11" rx="1" fill="#ddd" stroke="#666" /><path d="M2 9l7-7" stroke="#999" /></svg>
    <Field cls="w-[51px]" />
    <svg width="11" height="13" viewBox="0 0 11 13" className="ml-[7px]"><rect x="1" y="1" width="5" height="11" fill="#aaa" /><rect x="7" y="8" width="3" height="4" fill="#2e86d0" /></svg>
    <svg width="15" height="13" viewBox="0 0 15 13" className="ml-[8px]"><path d="M1 3h13M2 3v8M7.500 3v8M13 3v8" stroke="#3a8ec8" strokeWidth="1" fill="none" /></svg>
    <span className="ml-[3px] w-[14px] text-[6.5px]">毫米</span>
    <svg width="13" height="13" viewBox="0 0 13 13" className="ml-[17px]"><circle cx="6.500" cy="6.500" r="4.500" fill="#dbe9f6" stroke="#4a8ac8" /><path d="M6.500 0v13M0 6.500h13" stroke="#4a8ac8" strokeWidth=".8" /></svg>
    <span className="ml-[2px] w-[19px]">0.005</span>
    <svg width="13" height="13" viewBox="0 0 13 13" className="ml-[13px]"><path d="M7 1v7H2M7 8l-3 4M9 3v6" fill="none" stroke="#4a8ac8" strokeWidth="1" /></svg>
    <span className="ml-[1px] w-[12px]">0.0</span>
    <svg width="11" height="11" viewBox="0 0 11 11" className="ml-[20px]"><circle cx="5.500" cy="5.500" r="4" fill="none" stroke="#777" /><path d="M1 10l9-9" stroke="#777" /></svg>
    <span className="ml-[4px] w-[11px]">4.0</span>
    <svg width="13" height="13" viewBox="0 0 13 13" className="ml-[19px]"><path d="M1 12Q7 11 12 2M1 12h5" fill="none" stroke="#6aa050" strokeWidth="1" /></svg>
    <span className="ml-[3px]">2.0</span>
  </div>
);

/* =======================
   Page
======================= */

const App = () => (
  <div className="w-[1280px] h-[720px] bg-black overflow-hidden pl-[90px]">
    <div className={`w-[1102px] h-[720px] flex flex-col bg-[#f2f2f2] ${FONT} blur-[0.4px]`}>
      <div className="h-[15px] flex items-center bg-[#f3f3f3]">
        <QuickBar />
        <span className="ml-[302px] text-[7px] text-[#cfcfcf] whitespace-nowrap">
          Autodesk PowerMill Ultimate 2020&nbsp;&nbsp;[只读编辑项目 - RGBJ-55_05 ]
        </span>
      </div>
      <TabBar />
      <Ribbon />
      <div className="flex flex-1 min-h-0">
        <ResourcePanel />
        <div className="flex-1 min-w-0 bg-linear-to-b from-[#f4f4f4] via-[#c4c4c4] via-45% to-[#6e6e6e]">
          <ModelView />
        </div>
        <RightBar />
      </div>
      <StatusBar />
    </div>
  </div>
);

export default App;
